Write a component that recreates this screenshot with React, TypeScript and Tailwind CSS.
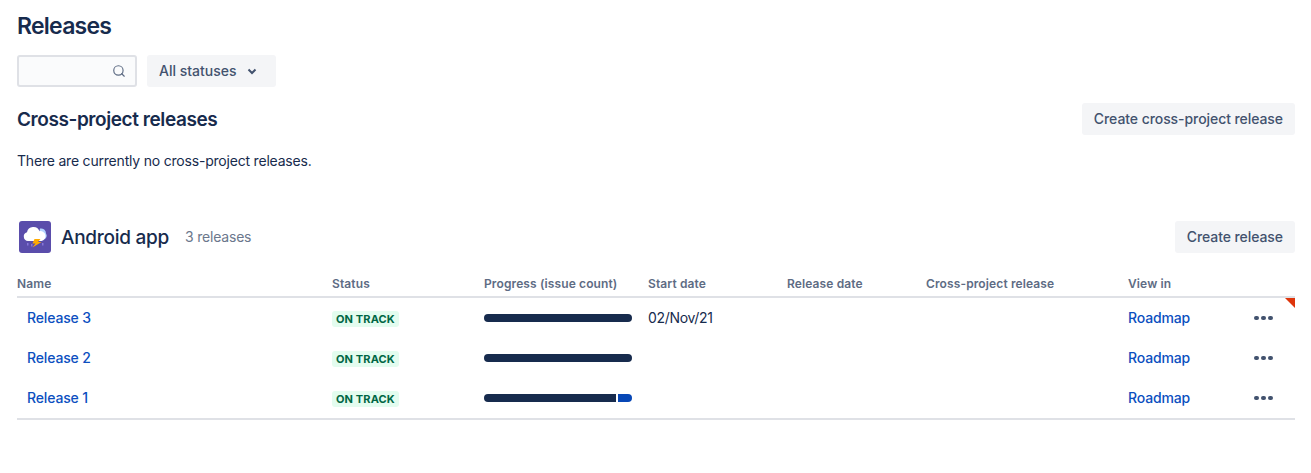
import React from "react";
import { Search } from "lucide-react";

const cols = "grid grid-cols-[315px_152px_164px_139px_139px_202px_1fr]";

function Avatar() {
  return (
    <svg width="32" height="32" viewBox="0 0 32 32" className="shrink-0">
      <rect width="32" height="32" rx="3" fill="#5A4DAB" />
      <path d="M21 7.500 a5 5 0 0 1 6 5 a4 4 0 0 1 -2 6 h-6z" fill="#B3D4FF" />
      <path d="M9 20 a4.500 4.500 0 0 1 -1 -8.800 a6.500 6.500 0 0 1 12.500 -1 a5 5 0 0 1 2 9.800z" fill="#FFFFFF" />
      <path d="M15.500 18 h6 l-2.500 3 h3.500 l-9 5.500 l3 -4 h-3z" fill="#FFAB00" />
      <rect x="8" y="22" width="1.500" height="2.500" fill="#8777D9" />
      <rect x="12" y="23" width="1.500" height="2.500" fill="#8777D9" />
      <rect x="23" y="22" width="1.500" height="2.500" fill="#8777D9" />
    </svg>
  );
}

function Dots() {
  return (
    <div className="flex gap-[2.5px]">
      <span className="w-[4.5px] h-[4.5px] rounded-full bg-[#42526e]" />
      <span className="w-[4.5px] h-[4.5px] rounded-full bg-[#42526e]" />
      <span className="w-[4.5px] h-[4.5px] rounded-full bg-[#42526e]" />
    </div>
  );
}

function Row({ name, start, partial, flag }: { name: string; start?: string; partial?: boolean; flag?: boolean }) {
  return (
    <div className={`${cols} relative h-10 items-center`}>
      <a className="pl-[10px] text-[#0c4fbf] font-medium tracking-[-0.15px]">{name}</a>
      <div>
        <span className="inline-block h-4 leading-4 rounded-[3px] bg-[#e3fcef] px-1 text-[11px] font-bold text-[#006644] tracking-[0.12px]">ON TRACK</span>
      </div>
      <div className="flex w-[148px] h-2 rounded-full overflow-hidden gap-[2px]">
        <div className="flex-1 bg-[#172b4d]" />
        {partial && <div className="w-[14px] bg-[#0747b6]" />}
      </div>
      <div className="tracking-[-0.3px]">{start}</div>
      <div />
      <div />
      <div className="flex items-center">
        <a className="text-[#0c4fbf] font-medium tracking-[-0.15px]">Roadmap</a>
        <div className="ml-[64px]"><Dots /></div>
      </div>
      {flag && <div className="absolute right-0 top-0 w-0 h-0 border-l-[10px] border-l-transparent border-t-[10px] border-t-[#de350b]" />}
    </div>
  );
}

export default function App() {
  return (
    <div className="w-[1311px] h-[473px] bg-white px-[17px] text-sm text-[#172b4d] font-['Inter',sans-serif] overflow-hidden">
      <div className="w-[1278px]">
        <h1 className="pt-[12px] text-[23px] leading-7 font-semibold tracking-[-0.75px]">Releases</h1>
        <div className="mt-[15px] flex gap-[10px]">
          <div className="flex items-center justify-end w-[120px] h-8 rounded-[3px] border-2 border-[#dfe1e6] bg-[#fafbfc] pr-[9px]">
            <Search size={14} strokeWidth={2} className="text-[#5e6c84]" />
          </div>
          <button className="flex items-center h-8 w-[129px] pl-3 rounded-[3px] bg-[#f4f5f7] font-medium text-[#42526e]">
            All statuses
            <svg width="10" height="8" viewBox="0 0 10 8" className="ml-[10px] mt-[2px]">
              <path d="M1.500 1.500 L5 5 L8.500 1.500" fill="none" stroke="#42526e" strokeWidth="2" />
            </svg>
          </button>
        </div>
        <div className="mt-4 flex items-center justify-between">
          <h2 className="pt-[2px] text-[19px] leading-6 font-semibold tracking-[-0.42px]">Cross-project releases</h2>
          <button className="h-8 px-3 rounded-[3px] bg-[#f4f5f7] font-medium text-[#42526e] tracking-[-0.07px]">Create cross-project release</button>
        </div>
        <p className="mt-[16px] leading-5 tracking-[-0.2px]">There are currently no cross-project releases.</p>
        <div className="mt-[50px] flex items-center">
          <div className="ml-[2px]"><Avatar /></div>
          <h2 className="ml-[10px] pt-[2px] text-[19px] leading-6 font-medium tracking-[-0.27px]">Android app</h2>
          <span className="ml-4 text-[#6b778c] tracking-[-0.2px]">3 releases</span>
          <button className="ml-auto h-8 px-3 rounded-[3px] bg-[#f4f5f7] font-medium text-[#42526e] tracking-[-0.07px]">Create release</button>
        </div>
        <div className={`${cols} mt-[21px] h-[24px] pb-[2px] border-b-2 border-[#dfe1e6] text-xs font-semibold text-[#5e6c84] leading-4 items-center tracking-[0.12px]`}>
          <div>Name</div>
          <div>Status</div>
          <div>Progress (issue count)</div>
          <div>Start date</div>
          <div>Release date</div>
          <div>Cross-project release</div>
          <div>View in</div>
        </div>
        <Row name="Release 3" start="02/Nov/21" flag />
        <Row name="Release 2" />
        <Row name="Release 1" partial />
        <div className="border-t-2 border-[#dfe1e6]" />
      </div>
    </div>
  );
}
